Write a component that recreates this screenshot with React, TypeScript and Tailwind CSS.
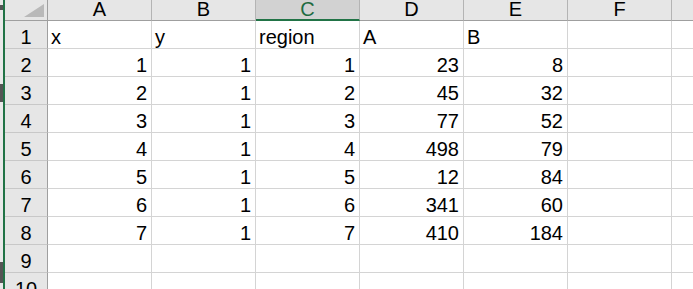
import React from 'react';

const cols = ['A', 'B', 'C', 'D', 'E', 'F'];

const rows: (string | number)[][] = [
  ['x', 'y', 'region', 'A', 'B', ''],
  [1, 1, 1, 23, 8, ''],
  [2, 1, 2, 45, 32, ''],
  [3, 1, 3, 77, 52, ''],
  [4, 1, 4, 498, 79, ''],
  [5, 1, 5, 12, 84, ''],
  [6, 1, 6, 341, 60, ''],
  [7, 1, 7, 410, 184, ''],
  ['', '', '', '', '', ''],
  ['', '', '', '', '', ''],
];

const HeaderRow: React.FC = () => (
  <div className="flex h-[21px] shrink-0 bg-[#e6e6e6]">
    <div className="w-[43px] shrink-0 border-r border-b border-[#9f9f9f] flex items-end justify-end pr-[2px] pb-[3px]">
      <svg width="21" height="13" viewBox="0 0 21 13">
        <polygon points="20,0 20,13 0,13" fill="#b9b9b9" />
      </svg>
    </div>
    {cols.map((c) => {
      const active = c === 'C';
      return (
        <div
          key={c}
          className={
            active
              ? 'w-[104px] shrink-0 border-r border-[#b4b4b4] border-b-2 border-b-[#217346] bg-[#d2d2d2] text-[#1e6b41] text-center leading-[18px]'
              : 'w-[104px] shrink-0 border-r border-b border-[#b4b4b4] border-b-[#9f9f9f] text-center leading-[18px]'
          }
        >
          {c}
        </div>
      );
    })}
    <div className="flex-1 border-b border-[#9f9f9f]" />
  </div>
);

const DataRow: React.FC<{ n: number; cells: (string | number)[] }> = ({ n, cells }) => (
  <div className="flex h-[28px] shrink-0">
    <div className="w-[43px] shrink-0 bg-[#e6e6e6] border-r border-r-[#9f9f9f] border-b border-b-[#c8c8c8] flex items-end justify-center leading-none pb-[1px]">
      {n}
    </div>
    {cells.map((v, i) => (
      <div
        key={i}
        className={
          'w-[104px] shrink-0 border-r border-b border-[#d4d4d4] flex items-end leading-none pb-[1px] ' +
          (typeof v === 'number' ? 'justify-end pr-[4px]' : 'justify-start pl-[3px]')
        }
      >
        {v}
      </div>
    ))}
    <div className="flex-1 border-b border-[#d4d4d4]" />
  </div>
);

export default function App() {
  return (
    <div className="w-[693px] h-[289px] overflow-hidden bg-white flex text-black text-[20px] font-['Liberation_Sans',Arial,sans-serif]">
      <div className="w-[3px] shrink-0 flex flex-col bg-[#e9e9e9]">
        <div className="h-[5px] shrink-0" />
        <div className="h-[5px] shrink-0 bg-[#555]" />
        <div className="h-[74px] shrink-0" />
        <div className="h-[18px] shrink-0 bg-[#555]" />
        <div className="h-[160px] shrink-0" />
        <div className="h-[21px] shrink-0 bg-[#555]" />
      </div>
      <div className="w-[2px] shrink-0 bg-[#217346]" />
      <div className="flex-1 flex flex-col">
        <HeaderRow />
        {rows.map((r, i) => (
          <DataRow key={i} n={i + 1} cells={r} />
        ))}
      </div>
    </div>
  );
}
